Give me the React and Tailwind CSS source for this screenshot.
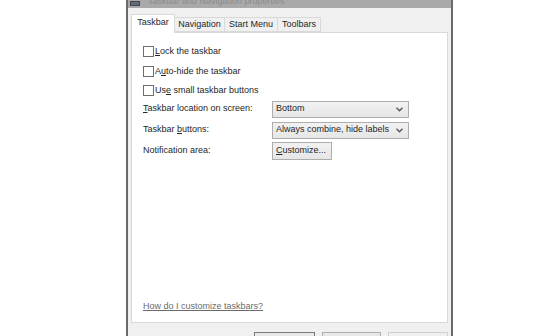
import React from 'react';

const Checkbox = ({ children }) => (
  <label className="flex items-center h-[19.5px]">
    <span className="w-[11px] h-[11px] border border-[#6f6f6f] bg-white shrink-0"></span>
    <span className="ml-[1px] whitespace-nowrap">{children}</span>
  </label>
);

const Select = ({ value }) => (
  <div className="w-[137px] h-[17px] border border-[#adadad] bg-gradient-to-b from-[#f2f2f2] to-[#e6e6e6] flex items-center justify-between pl-[3px] pr-[5px] whitespace-nowrap">
    <span>{value}</span>
    <svg width="7" height="5" viewBox="0 0 7 5">
      <path d="M0.5 0.8 L3.5 3.8 L6.5 0.8" fill="none" stroke="#555" strokeWidth="1.3" />
    </svg>
  </div>
);

const Row = ({ children, control }) => (
  <div className="flex items-center h-[21px]">
    <div className="w-[129px] whitespace-nowrap">{children}</div>
    {control}
  </div>
);

const Tab = ({ label, active, w }) => (
  <div
    className={`border border-[#d9d9d9] flex items-center justify-center whitespace-nowrap ${w} ${
      active ? 'h-[19px] bg-white border-b-0 -mb-[1px] z-10 relative pb-[2px]' : 'h-[15px] bg-[#f0f0f0] -ml-[1px]'
    }`}
  >
    {label}
  </div>
);

const App = () => {
  return (
    <div
      className="w-[560px] h-[336px] bg-white overflow-hidden relative text-[9px] text-[#262626]"
      style={{ fontFamily: '"Liberation Sans", Arial, sans-serif' }}
    >
      <div className="ml-[126px] w-[327px] h-[400px] border-x-2 border-[#6a6a6a] bg-[#f0f0f0] flex flex-col">
        {/* title bar */}
        <div className="h-[8px] bg-[#a9a9a9] overflow-hidden flex items-end px-[2px]">
          <div className="w-[10px] h-[5px] bg-[#5c6d80] border border-[#444] mb-[2px]"></div>
          <span className="ml-[8px] text-[#8c8c8c] leading-none mb-[2px] whitespace-nowrap">Taskbar and Navigation properties</span>
        </div>

        <div className="pl-[3px] pr-[3px] pt-[6px]">
          {/* tabs */}
          <div className="flex items-end">
            <Tab label="Taskbar" active w="w-[44px]" />
            <Tab label="Navigation" w="w-[51px]" />
            <Tab label="Start Menu" w="w-[54px]" />
            <Tab label="Toolbars" w="w-[44px]" />
          </div>

          {/* panel */}
          <div className="h-[291px] bg-white border border-[#d9d9d9] pl-[11px] pt-[9px] flex flex-col">
            <Checkbox><span className="underline">L</span>ock the taskbar</Checkbox>
            <Checkbox>A<span className="underline">u</span>to-hide the taskbar</Checkbox>
            <Checkbox>Us<span className="underline">e</span> small taskbar buttons</Checkbox>

            <div className="-mt-[2px] flex flex-col">
              <Row control={<Select value="Bottom" />}>
                <span className="underline">T</span>askbar location on screen:
              </Row>
              <Row control={<Select value="Always combine, hide labels" />}>
                Taskbar <span className="underline">b</span>uttons:
              </Row>
              <Row
                control={
                  <div className="w-[60px] h-[18px] border border-[#adadad] bg-gradient-to-b from-[#f2f2f2] to-[#e6e6e6] flex items-center pl-[3px] whitespace-nowrap">
                    <span className="underline">C</span>ustomize...
                  </div>
                }
              >
                Notification area:
              </Row>
            </div>

            <div className="mt-auto mb-[9px]">
              <span className="underline text-[#6b6b6b]">How do I customize taskbars?</span>
            </div>
          </div>

          {/* buttons */}
          <div className="flex justify-end gap-[7px] pt-[9px]">
            <div className="w-[61px] h-[22px] border border-[#7a7a7a] bg-[#e8e8e8] flex justify-center pt-[3px]">OK</div>
            <div className="w-[59px] h-[22px] border border-[#adadad] bg-[#e8e8e8] flex justify-center pt-[3px]">Cancel</div>
            <div className="w-[60px] h-[22px] border border-[#d0d0d0] bg-[#f0f0f0] text-[#a0a0a0] flex justify-center pt-[3px]">Apply</div>
          </div>
        </div>
      </div>
    </div>
  );
};

export default App;
